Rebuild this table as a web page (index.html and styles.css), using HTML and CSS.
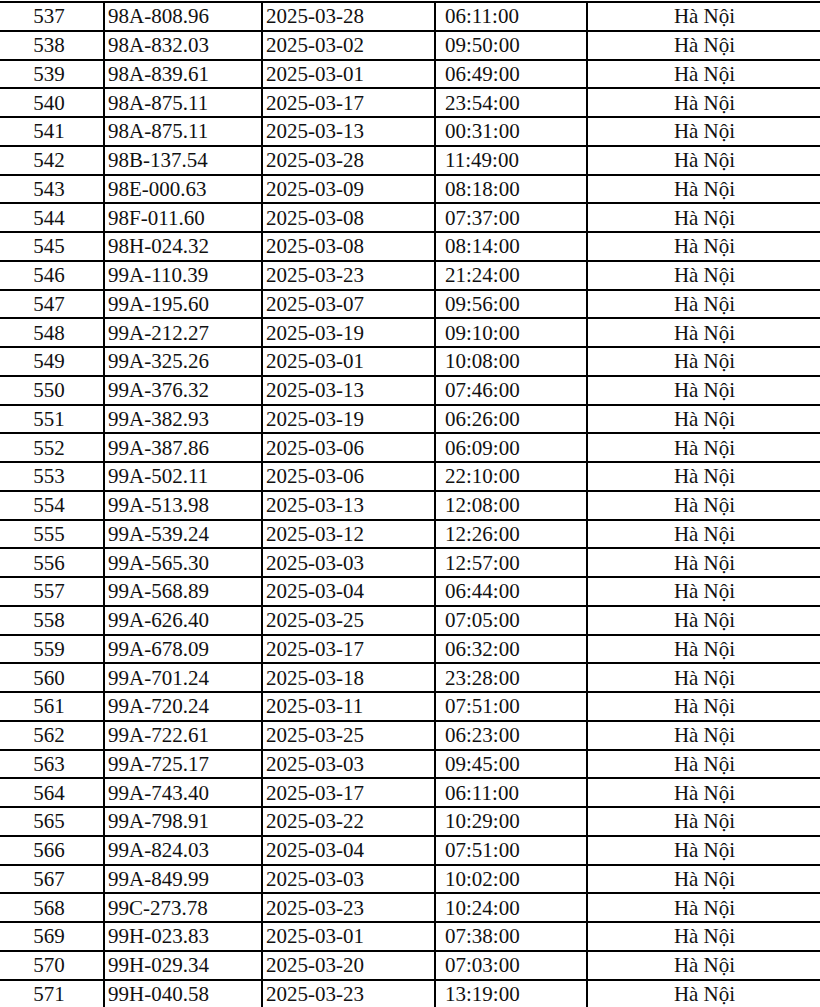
FILE: index.html
```html
<!DOCTYPE html>
<html lang="vi">
<head>
<meta charset="utf-8">
<title>Danh sách</title>
<link rel="stylesheet" href="styles.css">
</head>
<body>
<div class="sheet">
<table class="list">
<colgroup><col class="c-no"><col class="c-plate"><col class="c-date"><col class="c-time"><col class="c-place"></colgroup>
<tbody>
<tr><td class="no">537</td><td class="plate">98A-808.96</td><td class="date">2025-03-28</td><td class="time">06:11:00</td><td class="place">Hà Nội</td></tr>
<tr><td class="no">538</td><td class="plate">98A-832.03</td><td class="date">2025-03-02</td><td class="time">09:50:00</td><td class="place">Hà Nội</td></tr>
<tr><td class="no">539</td><td class="plate">98A-839.61</td><td class="date">2025-03-01</td><td class="time">06:49:00</td><td class="place">Hà Nội</td></tr>
<tr><td class="no">540</td><td class="plate">98A-875.11</td><td class="date">2025-03-17</td><td class="time">23:54:00</td><td class="place">Hà Nội</td></tr>
<tr><td class="no">541</td><td class="plate">98A-875.11</td><td class="date">2025-03-13</td><td class="time">00:31:00</td><td class="place">Hà Nội</td></tr>
<tr><td class="no">542</td><td class="plate">98B-137.54</td><td class="date">2025-03-28</td><td class="time">11:49:00</td><td class="place">Hà Nội</td></tr>
<tr><td class="no">543</td><td class="plate">98E-000.63</td><td class="date">2025-03-09</td><td class="time">08:18:00</td><td class="place">Hà Nội</td></tr>
<tr><td class="no">544</td><td class="plate">98F-011.60</td><td class="date">2025-03-08</td><td class="time">07:37:00</td><td class="place">Hà Nội</td></tr>
<tr><td class="no">545</td><td class="plate">98H-024.32</td><td class="date">2025-03-08</td><td class="time">08:14:00</td><td class="place">Hà Nội</td></tr>
<tr><td class="no">546</td><td class="plate">99A-110.39</td><td class="date">2025-03-23</td><td class="time">21:24:00</td><td class="place">Hà Nội</td></tr>
<tr><td class="no">547</td><td class="plate">99A-195.60</td><td class="date">2025-03-07</td><td class="time">09:56:00</td><td class="place">Hà Nội</td></tr>
<tr><td class="no">548</td><td class="plate">99A-212.27</td><td class="date">2025-03-19</td><td class="time">09:10:00</td><td class="place">Hà Nội</td></tr>
<tr><td class="no">549</td><td class="plate">99A-325.26</td><td class="date">2025-03-01</td><td class="time">10:08:00</td><td class="place">Hà Nội</td></tr>
<tr><td class="no">550</td><td class="plate">99A-376.32</td><td class="date">2025-03-13</td><td class="time">07:46:00</td><td class="place">Hà Nội</td></tr>
<tr><td class="no">551</td><td class="plate">99A-382.93</td><td class="date">2025-03-19</td><td class="time">06:26:00</td><td class="place">Hà Nội</td></tr>
<tr><td class="no">552</td><td class="plate">99A-387.86</td><td class="date">2025-03-06</td><td class="time">06:09:00</td><td class="place">Hà Nội</td></tr>
<tr><td class="no">553</td><td class="plate">99A-502.11</td><td class="date">2025-03-06</td><td class="time">22:10:00</td><td class="place">Hà Nội</td></tr>
<tr><td class="no">554</td><td class="plate">99A-513.98</td><td class="date">2025-03-13</td><td class="time">12:08:00</td><td class="place">Hà Nội</td></tr>
<tr><td class="no">555</td><td class="plate">99A-539.24</td><td class="date">2025-03-12</td><td class="time">12:26:00</td><td class="place">Hà Nội</td></tr>
<tr><td class="no">556</td><td class="plate">99A-565.30</td><td class="date">2025-03-03</td><td class="time">12:57:00</td><td class="place">Hà Nội</td></tr>
<tr><td class="no">557</td><td class="plate">99A-568.89</td><td class="date">2025-03-04</td><td class="time">06:44:00</td><td class="place">Hà Nội</td></tr>
<tr><td class="no">558</td><td class="plate">99A-626.40</td><td class="date">2025-03-25</td><td class="time">07:05:00</td><td class="place">Hà Nội</td></tr>
<tr><td class="no">559</td><td class="plate">99A-678.09</td><td class="date">2025-03-17</td><td class="time">06:32:00</td><td class="place">Hà Nội</td></tr>
<tr><td class="no">560</td><td class="plate">99A-701.24</td><td class="date">2025-03-18</td><td class="time">23:28:00</td><td class="place">Hà Nội</td></tr>
<tr><td class="no">561</td><td class="plate">99A-720.24</td><td class="date">2025-03-11</td><td class="time">07:51:00</td><td class="place">Hà Nội</td></tr>
<tr><td class="no">562</td><td class="plate">99A-722.61</td><td class="date">2025-03-25</td><td class="time">06:23:00</td><td class="place">Hà Nội</td></tr>
<tr><td class="no">563</td><td class="plate">99A-725.17</td><td class="date">2025-03-03</td><td class="time">09:45:00</td><td class="place">Hà Nội</td></tr>
<tr><td class="no">564</td><td class="plate">99A-743.40</td><td class="date">2025-03-17</td><td class="time">06:11:00</td><td class="place">Hà Nội</td></tr>
<tr><td class="no">565</td><td class="plate">99A-798.91</td><td class="date">2025-03-22</td><td class="time">10:29:00</td><td class="place">Hà Nội</td></tr>
<tr><td class="no">566</td><td class="plate">99A-824.03</td><td class="date">2025-03-04</td><td class="time">07:51:00</td><td class="place">Hà Nội</td></tr>
<tr><td class="no">567</td><td class="plate">99A-849.99</td><td class="date">2025-03-03</td><td class="time">10:02:00</td><td class="place">Hà Nội</td></tr>
<tr><td class="no">568</td><td class="plate">99C-273.78</td><td class="date">2025-03-23</td><td class="time">10:24:00</td><td class="place">Hà Nội</td></tr>
<tr><td class="no">569</td><td class="plate">99H-023.83</td><td class="date">2025-03-01</td><td class="time">07:38:00</td><td class="place">Hà Nội</td></tr>
<tr><td class="no">570</td><td class="plate">99H-029.34</td><td class="date">2025-03-20</td><td class="time">07:03:00</td><td class="place">Hà Nội</td></tr>
<tr><td class="no">571</td><td class="plate">99H-040.58</td><td class="date">2025-03-23</td><td class="time">13:19:00</td><td class="place">Hà Nội</td></tr>
</tbody>
</table>
</div>
</body>
</html>
```

FILE: styles.css
```css
html, body {
  margin: 0;
  padding: 0;
  background: #ffffff;
}

.sheet {
  width: 820px;
  height: 1007px;
  overflow: hidden;
}

.list {
  border-collapse: collapse;
  table-layout: fixed;
  width: 828px;
  margin-left: -7px;
  margin-top: 1px;
  font-family: "Liberation Serif", "Times New Roman", serif;
  font-size: 21px;
  color: #111111;
}

.c-no { width: 110px; }
.c-plate { width: 158px; }
.c-date { width: 173px; }
.c-time { width: 152px; }
.c-place { width: 235px; }

.list td {
  border: 2px solid #000;
  height: 26.75px;
  padding: 0;
  line-height: 22px;
  vertical-align: middle;
  white-space: nowrap;
}

.no { text-align: center; }
.plate { padding-left: 3px !important; }
.date { padding-left: 3px !important; }
.time { padding-left: 9px !important; }
.place { text-align: center; }
```
